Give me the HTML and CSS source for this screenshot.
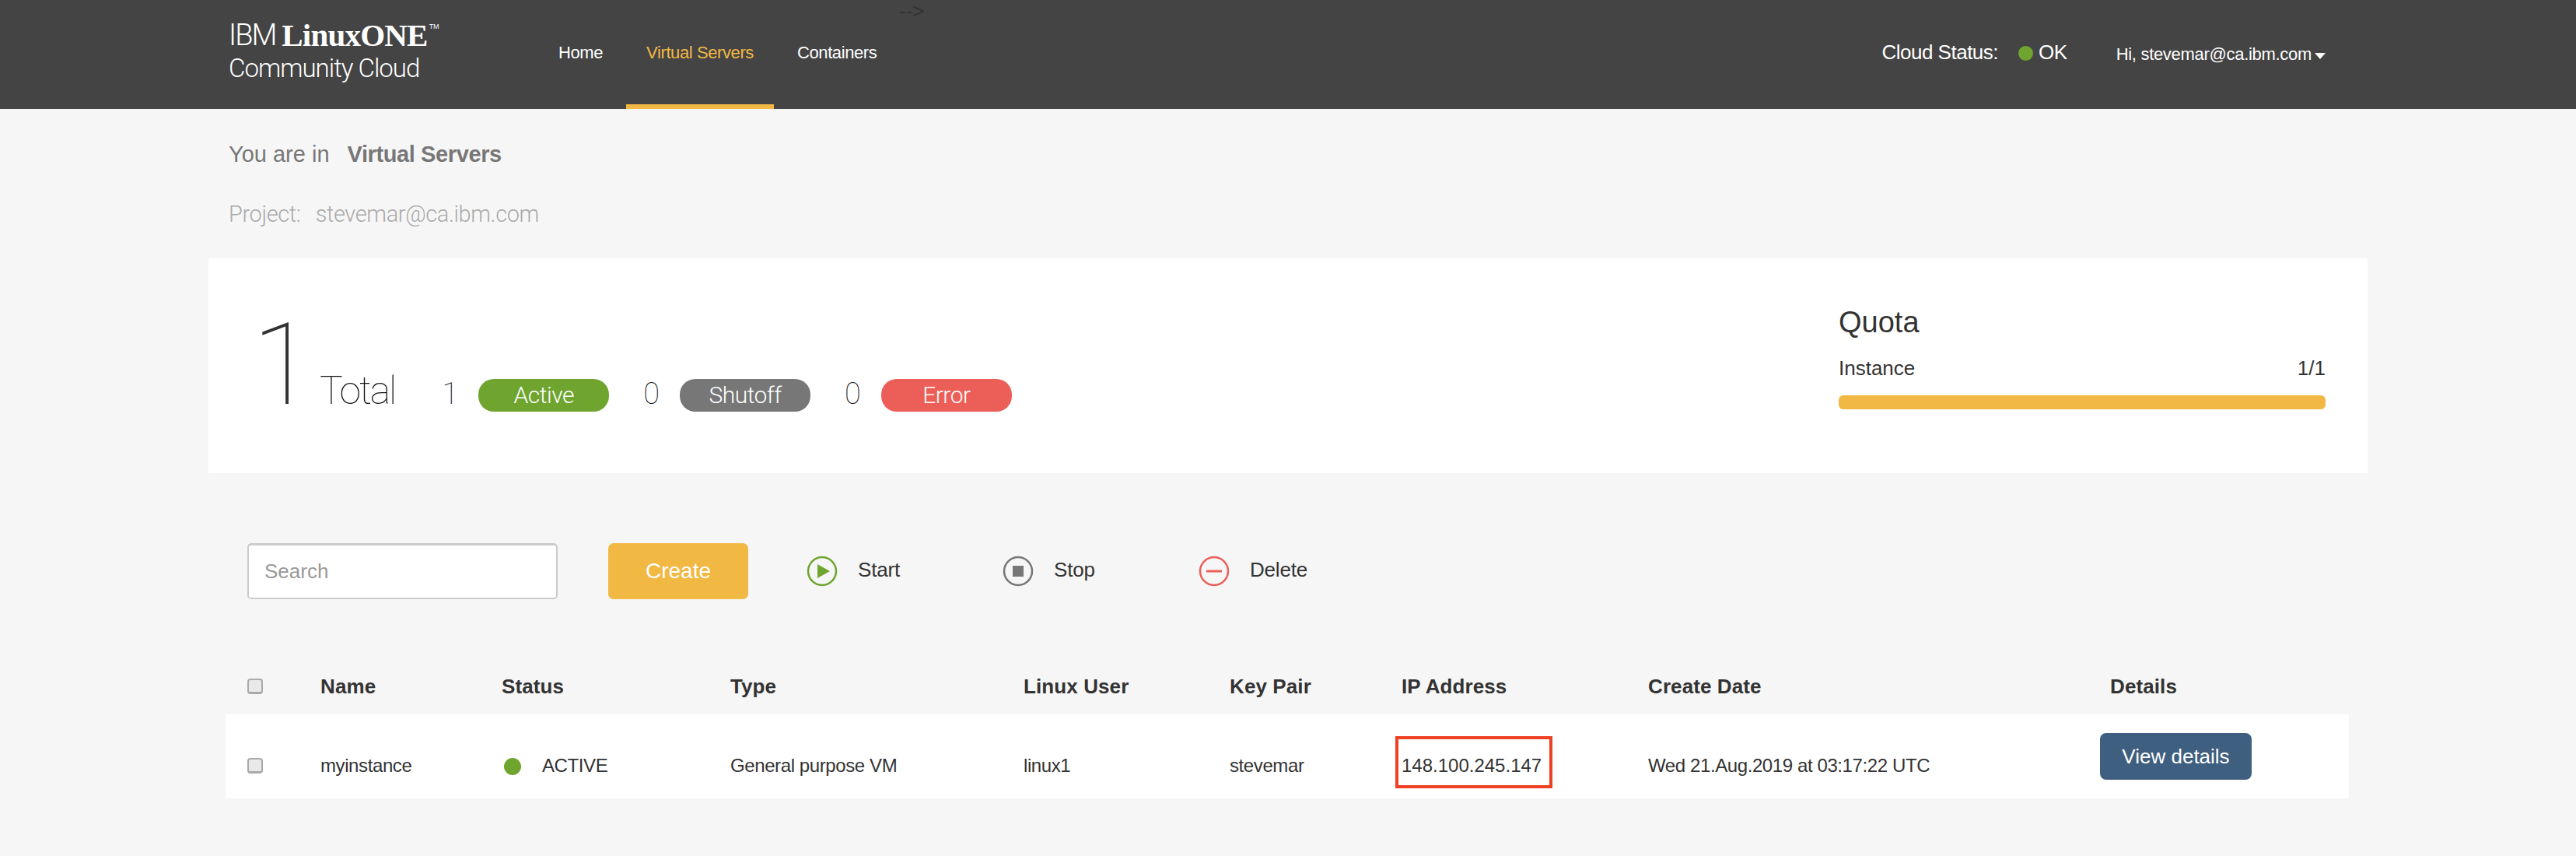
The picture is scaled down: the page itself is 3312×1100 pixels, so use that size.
FILE: index.html
```html
<!DOCTYPE html>
<html lang="en">
<head>
    <meta charset="UTF-8">
    <title>Virtual Servers</title>
    <link rel="stylesheet" href="styles.css">
</head>
<body>
    <header class="topbar">
        <span class="stray">--&gt;</span>
        <div class="logo">
            <div class="logo-top"><span class="logo-ibm">IBM</span> <span class="logo-name">LinuxONE</span><span class="logo-tm">TM</span></div>
            <div class="logo-sub">Community Cloud</div>
        </div>
        <nav class="nav">
            <a class="nav-item">Home</a>
            <a class="nav-item active">Virtual Servers</a>
            <a class="nav-item">Containers</a>
        </nav>
        <div class="status">
            <span>Cloud Status:</span>
            <span class="status-dot"></span>
            <span>OK</span>
        </div>
        <div class="user">Hi, stevemar@ca.ibm.com<span class="caret"></span></div>
    </header>

    <div class="crumbs">
        <div class="crumb-line"><span>You are in</span><b>Virtual Servers</b></div>
        <div class="project">Project:&nbsp; stevemar@ca.ibm.com</div>
    </div>

    <section class="summary">
        <div class="counts">
            <span class="big-num">1</span>
            <span class="total">Total</span>
            <span class="count first">1</span>
            <span class="pill green">Active</span>
            <span class="count">0</span>
            <span class="pill gray">Shutoff</span>
            <span class="count">0</span>
            <span class="pill red">Error</span>
        </div>
        <div class="quota">
            <div class="quota-title">Quota</div>
            <div class="quota-row"><span>Instance</span><span>1/1</span></div>
            <div class="quota-bar"></div>
        </div>
    </section>

    <div class="toolbar">
        <input class="search" type="text" placeholder="Search">
        <button class="create">Create</button>
        <a class="action">
            <svg viewBox="0 0 40 40" width="40" height="40"><circle cx="20" cy="20" r="18" fill="none" stroke="#6fa52f" stroke-width="2.5"/><path d="M14 11 L30 20 L14 29 Z" fill="#6fa52f"/></svg>
            <span>Start</span>
        </a>
        <a class="action">
            <svg viewBox="0 0 40 40" width="40" height="40"><circle cx="20" cy="20" r="18" fill="none" stroke="#777" stroke-width="2.5"/><rect x="13" y="13" width="14" height="14" fill="#777"/></svg>
            <span>Stop</span>
        </a>
        <a class="action">
            <svg viewBox="0 0 40 40" width="40" height="40"><circle cx="20" cy="20" r="18" fill="none" stroke="#ec5f59" stroke-width="2.5"/><rect x="10" y="18.5" width="20" height="3" fill="#ec5f59"/></svg>
            <span>Delete</span>
        </a>
    </div>

    <div class="table">
        <div class="row head">
            <span class="check"></span>
            <span>Name</span>
            <span>Status</span>
            <span>Type</span>
            <span>Linux User</span>
            <span>Key Pair</span>
            <span>IP Address</span>
            <span>Create Date</span>
            <span>Details</span>
        </div>
        <div class="row body">
            <span class="check"></span>
            <span>myinstance</span>
            <span class="state"><i class="state-dot"></i>ACTIVE</span>
            <span>General purpose VM</span>
            <span>linux1</span>
            <span>stevemar</span>
            <span class="ip">148.100.245.147<i class="ip-box"></i></span>
            <span>Wed 21.Aug.2019 at 03:17:22 UTC</span>
            <span><button class="details">View details</button></span>
        </div>
    </div>
</body>
</html>
```

FILE: styles.css
```css
body {
    margin: 0;
    background-color: #f6f6f6;
    font-family: "Liberation Sans", Arial, sans-serif;
    color: #333;
}

/* Top bar */
.topbar {
    position: relative;
    display: flex;
    align-items: center;
    height: 140px;
    padding-left: 294px;
    background-color: #444;
    color: #fff;
}
.stray {
    position: absolute;
    left: 1156px;
    top: -1px;
    font-size: 26px;
    color: #333;
}
.logo {
    width: 398px;
    margin-top: -6px;
}
.logo-top {
    display: flex;
    align-items: flex-start;
    height: 36px;
    line-height: 36px;
}
.logo-ibm {
    font-family: Roboto, sans-serif;
    font-weight: 300;
    font-size: 38px;
    letter-spacing: -2px;
    margin-right: 8px;
}
.logo-name {
    font-family: "Liberation Serif", serif;
    font-weight: bold;
    font-size: 41px;
    letter-spacing: -0.8px;
}
.logo-tm {
    font-size: 9px;
    line-height: 14px;
    margin-left: 2px;
}
.logo-sub {
    font-family: Roboto, sans-serif;
    font-weight: 300;
    font-size: 33px;
    line-height: 40px;
    letter-spacing: -1px;
    margin-top: 5px;
}
.nav {
    display: flex;
    gap: 4px;
    align-self: stretch;
}
.nav-item {
    display: flex;
    align-items: center;
    padding: 2px 26px 0;
    font-size: 22px;
    letter-spacing: -0.4px;
    border-bottom: 6px solid transparent;
}
.nav-item.active {
    color: #f2b844;
    border-bottom-color: #f2b844;
}
.status {
    display: flex;
    align-items: center;
    margin-left: auto;
    font-size: 26px;
    letter-spacing: -0.5px;
    margin-bottom: 6px;
}
.status-dot {
    width: 19px;
    height: 19px;
    margin: 2px 7px 0 26px;
    border-radius: 50%;
    background-color: #6fa52f;
}
.user {
    display: flex;
    align-items: center;
    margin: 0 322px 0 63px;
    font-size: 22px;
    letter-spacing: -0.3px;
}
.caret {
    width: 0;
    height: 0;
    margin: 4px 0 0 4px;
    border-left: 7px solid transparent;
    border-right: 7px solid transparent;
    border-top: 8px solid #fff;
}

/* Breadcrumb */
.crumbs {
    padding: 40px 0 0 294px;
    height: 156px;
    box-sizing: border-box;
    font-size: 29px;
}
.crumb-line {
    display: flex;
    gap: 23px;
    line-height: 36px;
    color: #777;
}
.crumb-line b {
    letter-spacing: -0.4px;
}
.project {
    margin-top: 41px;
    line-height: 36px;
    font-family: Roboto, sans-serif;
    font-weight: 300;
    letter-spacing: -0.4px;
    word-spacing: 3px;
    color: #aaa;
}

/* Summary panel */
.summary {
    display: flex;
    justify-content: space-between;
    height: 276px;
    margin: 36px 268px 0;
    background-color: #fff;
}
.counts {
    display: flex;
    align-items: baseline;
    padding: 65px 0 0 56px;
    font-family: Roboto, sans-serif;
    font-weight: 100;
    color: #111;
}
.big-num {
    font-size: 146px;
    line-height: 146px;
    margin-right: 7px;
    color: #333;
}
.total {
    font-size: 50px;
    letter-spacing: -2px;
}
.count {
    margin: 0 26px 0 44px;
    font-size: 38px;
}
.count.first {
    margin-left: 60px;
    margin-right: 26px;
}
.pill {
    width: 168px;
    height: 42px;
    border-radius: 20px;
    font-size: 30px;
    font-weight: 300;
    line-height: 42px;
    letter-spacing: -0.5px;
    text-align: center;
    color: #fff;
    position: relative;
    top: -1px;
}
.green { background-color: #6fa52f; }
.gray { background-color: #777; }
.red { background-color: #ec5f59; }

.quota {
    width: 626px;
    margin-right: 54px;
    padding-top: 60px;
}
.quota-title {
    font-size: 38px;
    line-height: 44px;
}
.quota-row {
    display: flex;
    justify-content: space-between;
    margin-top: 21px;
    font-size: 26px;
    line-height: 32px;
}
.quota-bar {
    height: 18px;
    margin-top: 19px;
    border-radius: 6px;
    background-color: #f2b844;
}

/* Toolbar */
.toolbar {
    display: flex;
    align-items: center;
    height: 72px;
    margin: 90px 0 0 318px;
}
.search {
    box-sizing: border-box;
    width: 399px;
    height: 72px;
    padding: 0 20px;
    border: 2px solid #ccc;
    border-top-width: 3px;
    border-radius: 5px;
    font-family: inherit;
    font-size: 26px;
}
.search::placeholder {
    color: #999;
}
.create {
    width: 180px;
    height: 72px;
    margin: 0 75px 0 65px;
    border: 0;
    border-radius: 7px;
    background-color: #f2b844;
    color: #fff;
    font-family: inherit;
    font-size: 28px;
}
.action {
    display: flex;
    align-items: center;
    gap: 26px;
    width: 252px;
    font-size: 26px;
    letter-spacing: -0.2px;
}
.action svg {
    flex: none;
}
.action span {
    margin-top: -4px;
}

/* Instance table */
.table {
    margin: 76px 292px 0 290px;
}
.row {
    display: grid;
    grid-template-columns: 94px 233px 294px 377px 265px 221px 317px 594px 1fr;
    align-items: center;
    padding-left: 28px;
}
.row.head {
    height: 72px;
    font-size: 26px;
    font-weight: bold;
    letter-spacing: 0.1px;
}
.row.body {
    height: 108px;
    background-color: #fff;
    font-size: 24px;
    letter-spacing: -0.4px;
}
.check {
    box-sizing: border-box;
    width: 20px;
    height: 20px;
    border: 2px solid #aaa;
    border-bottom-width: 3px;
    border-radius: 4px;
    background-color: #e9e9e9;
}
.body span {
    position: relative;
    top: 12px;
}
.state {
    display: flex;
    align-items: center;
}
.state-dot {
    width: 22px;
    height: 22px;
    margin: 2px 27px 0 3px;
    border-radius: 50%;
    background-color: #6fa52f;
}
.body .ip {
    letter-spacing: 0;
}
.ip-box {
    position: absolute;
    left: -8px;
    top: -24px;
    width: 202px;
    height: 67px;
    box-sizing: border-box;
    border: 4px solid #ee4023;
}
.body .details {
    position: relative;
    top: -12px;
    left: -13px;
    width: 195px;
    height: 60px;
    border: 0;
    border-radius: 8px;
    background-color: #3f5f80;
    color: #fff;
    font-family: inherit;
    font-size: 26px;
}
```
